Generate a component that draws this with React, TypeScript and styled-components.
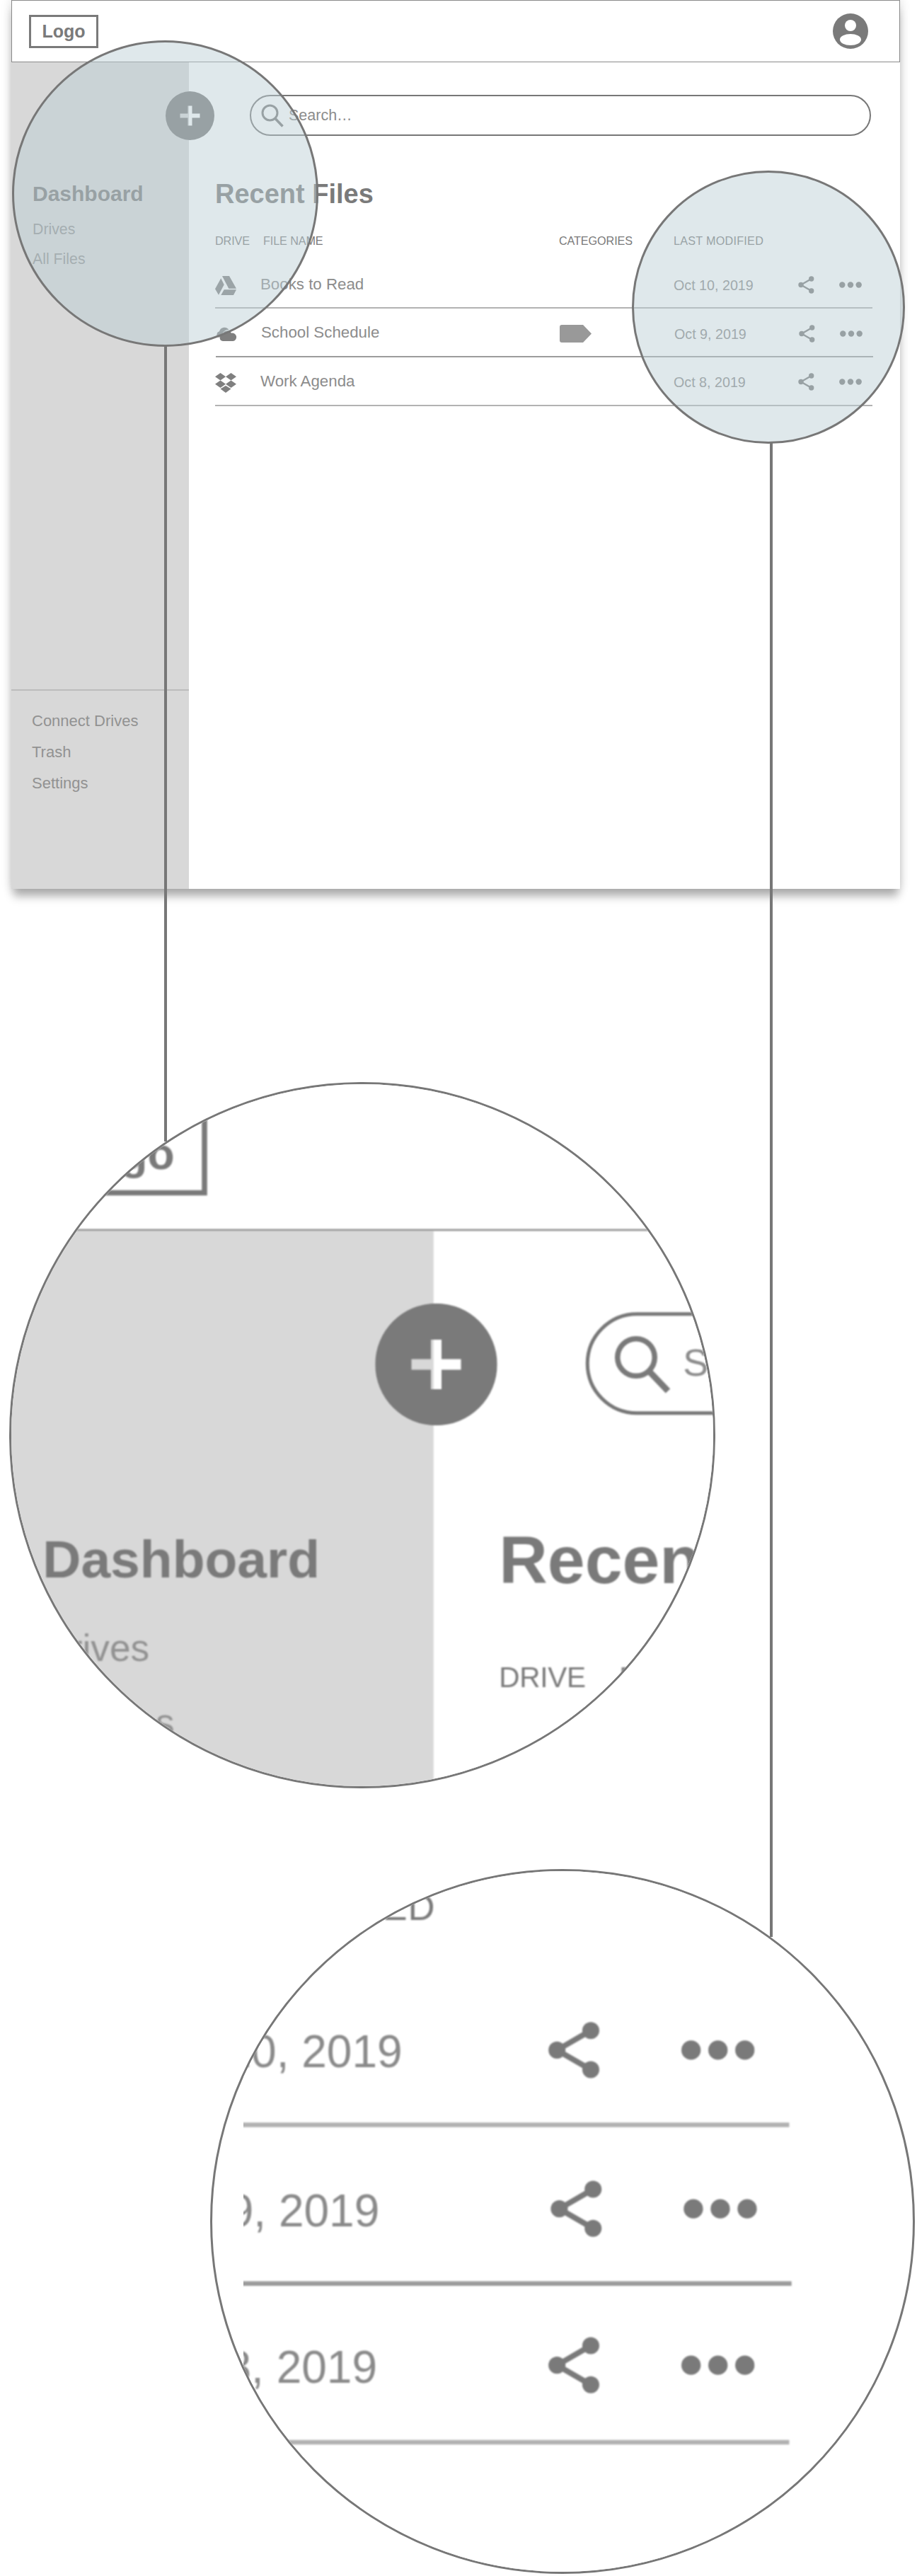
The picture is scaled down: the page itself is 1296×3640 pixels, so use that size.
import React from "react";
import styled, { createGlobalStyle } from "styled-components";

const GlobalStyle = createGlobalStyle`
  html, body { margin: 0; padding: 0; background: #fff; }
  body { font-family: "Liberation Sans", Arial, sans-serif; }
  * { box-sizing: border-box; }
`;

const Page = styled.div`
  position: relative;
  width: 1296px;
  height: 3640px;
  overflow: hidden;
  background: #fff;
  padding: 0 24px 0 16px;
`;

const Frame = styled.div<{ $shadow?: boolean }>`
  width: 1256px;
  height: 1256px;
  display: flex;
  flex-direction: column;
  background: #fff;
  ${(p) => p.$shadow && "box-shadow: 0 14px 12px -3px rgba(0,0,0,.28), 0 0 14px rgba(0,0,0,.16);"}
`;

const Header = styled.header`
  height: 88px;
  flex: none;
  display: flex;
  align-items: center;
  justify-content: space-between;
  padding: 0 44px 0 24px;
  border: 1px solid #8a8a8a;
  background: #fff;
`;

const LogoBox = styled.div`
  width: 98px;
  height: 47px;
  display: flex;
  align-items: center;
  justify-content: center;
  border: 3px solid #7a7a7a;
  color: #7a7a7a;
  font-size: 25px;
  font-weight: 700;
`;

const Body = styled.div`
  position: relative;
  flex: 1;
  display: flex;
  min-height: 0;
`;

const Sidebar = styled.aside`
  width: 251px;
  flex: none;
  display: flex;
  flex-direction: column;
  background: #d8d8d8;
  padding-top: 167.5px;
`;

const SideTitle = styled.div`
  padding-left: 30px;
  margin-bottom: 11px;
  color: #7a7a7a;
  font-size: 30px;
  line-height: 36px;
  font-weight: 700;
`;

const NavItem = styled.div`
  padding-left: 30px;
  height: 42.5px;
  line-height: 42.5px;
  color: #929292;
  font-size: 21.3px;
`;

const SideFoot = styled.div`
  margin-top: auto;
  height: 282px;
  padding-top: 21px;
  border-top: 2px solid #bcbcbc;
`;

const FootItem = styled.div`
  padding-left: 29px;
  height: 44px;
  line-height: 44px;
  color: #929292;
  font-size: 22px;
`;

const Fab = styled.svg`
  position: absolute;
  left: 218px;
  top: 41px;
  width: 69px;
  height: 69px;
  fill: #7a7a7a;
`;

const Main = styled.main`
  flex: 1;
  min-width: 0;
  padding: 46px 39px 0 37px;
`;

const Search = styled.div`
  height: 58px;
  margin: 0 2px 0 49px;
  padding-left: 14px;
  display: flex;
  align-items: center;
  gap: 7px;
  border: 2.5px solid #777;
  border-radius: 29px;
  color: #8c8c8c;
  font-size: 21.5px;
`;

const SearchIcon = styled.svg`
  width: 32px;
  height: 33px;
  flex: none;
  fill: none;
  stroke: #7a7a7a;
`;

const Title = styled.h1`
  margin: 59.5px 0 34.5px;
  color: #7a7a7a;
  font-size: 38px;
  line-height: 44px;
  font-weight: 700;
`;

const COLUMNS = "64px 422px 162px 176px 58px 1fr";

const HeadRow = styled.div`
  height: 37.9px;
  display: grid;
  grid-template-columns: ${COLUMNS};
  color: #7a7a7a;
  font-size: 16.2px;
  line-height: 20px;
  letter-spacing: -0.1px;
  white-space: nowrap;
`;

const HeadCell = styled.div<{ $inset?: boolean; $wide?: boolean }>`
  padding-left: ${(p) => (p.$inset ? "4px" : "0")};
  ${(p) => p.$wide && "letter-spacing: 0.25px;"}
`;

const Row = styled.div<{ $dark?: boolean }>`
  height: 68.6px;
  display: grid;
  grid-template-columns: ${COLUMNS};
  align-items: center;
  border-bottom: 2px solid ${(p) => (p.$dark ? "#9c9c9c" : "#b2b2b2")};
  ${(p) => p.$dark && "margin: 0 -1px 0 1px;"}
`;

const FileName = styled.div`
  padding-top: 1px;
  color: #8c8c8c;
  font-size: 22.3px;
  line-height: 28px;
  white-space: nowrap;
`;

const DateText = styled.div`
  padding-top: 4px;
  color: #8a8a8a;
  font-size: 19.7px;
  line-height: 24px;
  white-space: nowrap;
`;

const DriveIcon = styled.svg<{ $w: number; $h: number }>`
  display: block;
  width: ${(p) => p.$w}px;
  height: ${(p) => p.$h}px;
  margin-top: 5px;
  fill: #7f7f7f;
`;

const ActionIcon = styled.svg<{ $w: number; $h: number }>`
  display: block;
  width: ${(p) => p.$w}px;
  height: ${(p) => p.$h}px;
  margin-top: 3px;
  fill: #7a7a7a;
  stroke: #7a7a7a;
`;

const TagIcon = styled.svg`
  display: block;
  width: 45px;
  height: 25px;
  margin-top: 4px;
  fill: #999;
`;

const AvatarIcon = styled.svg`
  display: block;
  width: 50px;
  height: 50px;
`;

const Tinted = styled.div<{ $x: number; $y: number; $size: number }>`
  position: absolute;
  left: ${(p) => p.$x}px;
  top: ${(p) => p.$y}px;
  width: ${(p) => p.$size}px;
  height: ${(p) => p.$size}px;
  border: 3.5px solid #777;
  border-radius: 50%;
  background: rgba(187, 206, 213, 0.47);
`;

const Lens = styled.div<{ $x: number; $y: number; $size: number }>`
  position: absolute;
  left: ${(p) => p.$x}px;
  top: ${(p) => p.$y}px;
  width: ${(p) => p.$size}px;
  height: ${(p) => p.$size}px;
  border: 3px solid #777;
  border-radius: 50%;
  background: #fff;
  overflow: hidden;
`;

const LensCrop = styled.div<{ $left: number }>`
  position: absolute;
  top: 0;
  right: 0;
  bottom: 0;
  left: ${(p) => p.$left}px;
  overflow: hidden;
`;

const Magnified = styled.div<{ $x: number; $y: number; $scale: number }>`
  position: absolute;
  left: 0;
  top: 0;
  width: 1256px;
  transform-origin: 0 0;
  transform: translate(${(p) => p.$x}px, ${(p) => p.$y}px) scale(${(p) => p.$scale});
  filter: blur(0.4px);
`;

const Leader = styled.div<{ $x: number; $y: number; $h: number }>`
  position: absolute;
  left: ${(p) => p.$x}px;
  top: ${(p) => p.$y}px;
  width: 3.5px;
  height: ${(p) => p.$h}px;
  background: #777;
`;

const Drive = () => (
  <DriveIcon $w={30} $h={27} viewBox="0 0 30 27">
    <path d="M10 0h10l10 17.7H19.3z" />
    <path d="M8.3 3.3L0 18.3l5 8.4 7.7-14.4z" />
    <path d="M8.3 27H26l4-7.7H12.7z" />
  </DriveIcon>
);

const Cloud = () => (
  <DriveIcon $w={30} $h={20} viewBox="0 0 30 20">
    <path d="M3.5 14.5A4.5 4.5 0 0 1 5 6.3 7.5 7.5 0 0 1 18.6 4.2 8.4 8.4 0 0 0 9.2 9.7 5.3 5.3 0 0 0 5.5 14.5z" />
    <path d="M10 20a4.7 4.7 0 0 1-.6-9.3 6.9 6.9 0 0 1 12.6-2 5.7 5.7 0 0 1 2.6 11.3z" />
  </DriveIcon>
);

const Dropbox = () => (
  <DriveIcon $w={30} $h={28} viewBox="0 0 30 28">
    <path d="M7.5 0L15 5.2 7.5 10.4 0 5.2z" />
    <path d="M22.5 0L30 5.2l-7.5 5.2L15 5.2z" />
    <path d="M7.5 10.6L15 15.8 7.5 21 0 15.8z" />
    <path d="M22.5 10.6l7.5 5.2-7.5 5.2L15 15.8z" />
    <path d="M15 18l7.5 4.6L15 28l-7.5-5.4z" />
  </DriveIcon>
);

const Share = () => (
  <ActionIcon $w={23} $h={25} viewBox="0 0 23 25">
    <path d="M18.7 4L4 12.5 18.7 21" fill="none" strokeWidth="2.4" />
    <circle cx="4" cy="12.5" r="3.7" stroke="none" />
    <circle cx="18.7" cy="4" r="3.7" stroke="none" />
    <circle cx="18.7" cy="21" r="3.7" stroke="none" />
  </ActionIcon>
);

const Dots = () => (
  <ActionIcon $w={32} $h={9} viewBox="0 0 32 9">
    <circle cx="4.3" cy="4.5" r="4.2" stroke="none" />
    <circle cx="16" cy="4.5" r="4.2" stroke="none" />
    <circle cx="27.7" cy="4.5" r="4.2" stroke="none" />
  </ActionIcon>
);

const Tag = () => (
  <TagIcon viewBox="0 0 45 25">
    <path d="M3 0h30l12 12.5L33 25H3a3 3 0 0 1-3-3V3a3 3 0 0 1 3-3z" />
  </TagIcon>
);

const files = [
  { name: "Books to Read", date: "Oct 10, 2019", icon: <Drive />, tag: false, dark: false },
  { name: "School Schedule", date: "Oct 9, 2019", icon: <Cloud />, tag: true, dark: true },
  { name: "Work Agenda", date: "Oct 8, 2019", icon: <Dropbox />, tag: false, dark: false },
];

const AppWindow = ({ shadow }: { shadow?: boolean }) => (
  <Frame $shadow={shadow}>
    <Header>
      <LogoBox>Logo</LogoBox>
      <AvatarIcon viewBox="0 0 50 50">
        <circle cx="25" cy="25" r="25" fill="#7a7a7a" />
        <circle cx="25" cy="17" r="8" fill="#fff" />
        <ellipse cx="25" cy="37" rx="15" ry="8" fill="#fff" />
      </AvatarIcon>
    </Header>
    <Body>
      <Sidebar>
        <SideTitle>Dashboard</SideTitle>
        <NavItem>Drives</NavItem>
        <NavItem>All Files</NavItem>
        <SideFoot>
          <FootItem>Connect Drives</FootItem>
          <FootItem>Trash</FootItem>
          <FootItem>Settings</FootItem>
        </SideFoot>
      </Sidebar>
      <Main>
        <Search>
          <SearchIcon viewBox="0 0 32 33">
            <circle cx="12.5" cy="12.5" r="10.5" strokeWidth="3" />
            <path d="M20 20.5L30.5 31.5" strokeWidth="3.6" />
          </SearchIcon>
          Search…
        </Search>
        <Title>Recent Files</Title>
        <HeadRow>
          <HeadCell>DRIVE</HeadCell>
          <HeadCell $inset>FILE NAME</HeadCell>
          <HeadCell>CATEGORIES</HeadCell>
          <HeadCell $wide>LAST MODIFIED</HeadCell>
        </HeadRow>
        {files.map((f) => (
          <Row key={f.name} $dark={f.dark}>
            {f.icon}
            <FileName>{f.name}</FileName>
            <div>{f.tag && <Tag />}</div>
            <DateText>{f.date}</DateText>
            <Share />
            <Dots />
          </Row>
        ))}
      </Main>
      <Fab viewBox="0 0 69 69">
        <path
          fillRule="evenodd"
          d="M34.5 0a34.5 34.5 0 1 0 0 69a34.5 34.5 0 1 0 0-69z M31.5 20.5h6v11h11v6h-11v11h-6v-11h-11v-6h11z"
        />
      </Fab>
    </Body>
  </Frame>
);

const BORDER = 3;
const WINDOW_LEFT = 16;
const lensOffset = (r: number, sx: number, sy: number, s: number, cropLeft: number) => ({
  x: r - BORDER - cropLeft + (WINDOW_LEFT - sx) * s,
  y: r - BORDER - sy * s,
});

const upper = lensOffset(499, 226.7, 203.5, 2.5, 0);
const lower = lensOffset(498, 1134.4, 477, 3.25, 44);

export default function App() {
  return (
    <Page>
      <GlobalStyle />
      <AppWindow shadow />
      <Tinted $x={16.5} $y={57} $size={433} />
      <Tinted $x={893} $y={241} $size={386} />
      <Lens $x={13} $y={1529} $size={998}>
        <LensCrop $left={0}>
          <Magnified $x={upper.x} $y={upper.y} $scale={2.5}>
            <AppWindow />
          </Magnified>
        </LensCrop>
      </Lens>
      <Lens $x={297} $y={2641} $size={996}>
        <LensCrop $left={44}>
          <Magnified $x={lower.x} $y={lower.y} $scale={3.25}>
            <AppWindow />
          </Magnified>
        </LensCrop>
      </Lens>
      <Leader $x={232} $y={489} $h={1124} />
      <Leader $x={1088} $y={626} $h={2111} />
    </Page>
  );
}
